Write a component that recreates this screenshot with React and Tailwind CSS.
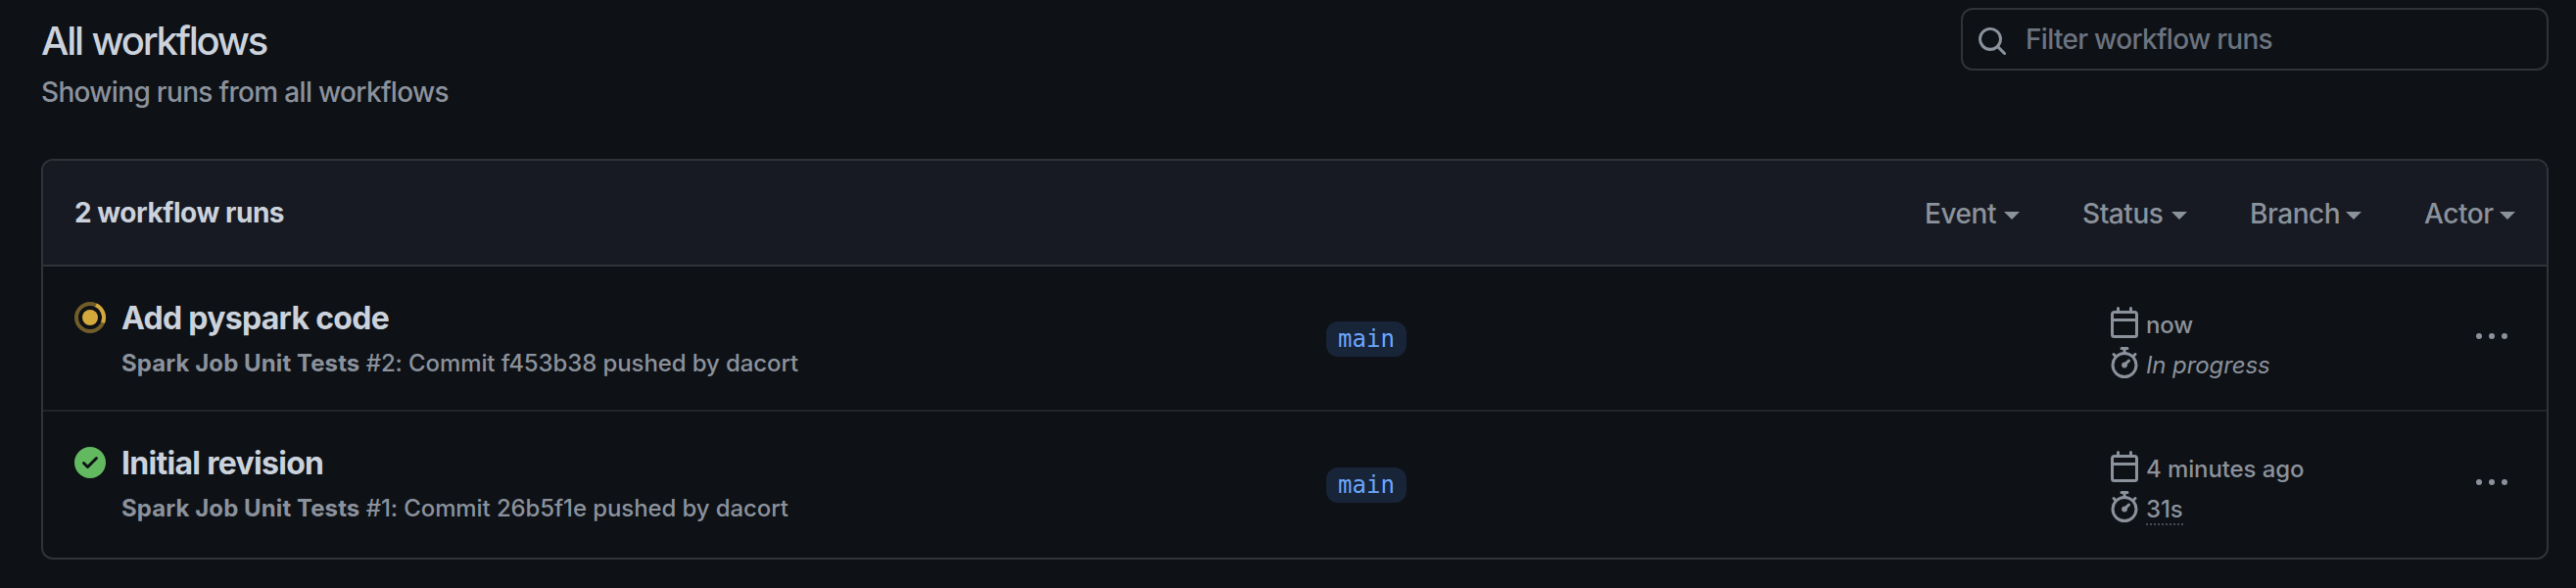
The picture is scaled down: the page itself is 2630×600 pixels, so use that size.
const CALENDAR =
  'M4.75 0a.75.75 0 0 1 .75.75V2h5V.75a.75.75 0 0 1 1.5 0V2h1.25c.966 0 1.75.784 1.75 1.75v10.5A1.75 1.75 0 0 1 13.25 16H2.75A1.75 1.75 0 0 1 1 14.25V3.75C1 2.784 1.784 2 2.75 2H4V.75A.75.75 0 0 1 4.75 0ZM2.5 7.5v6.75c0 .138.112.25.25.25h10.5a.25.25 0 0 0 .25-.25V7.5Zm10.75-4H2.75a.25.25 0 0 0-.25.25V6h11V3.75a.25.25 0 0 0-.25-.25Z';
const STOPWATCH =
  'M5.75.75A.75.75 0 0 1 6.5 0h3a.75.75 0 0 1 0 1.5h-.75v1l-.001.041a6.724 6.724 0 0 1 3.464 1.435l.007-.006.75-.75a.749.749 0 0 1 1.275.326.749.749 0 0 1-.215.734l-.75.75-.006.007a6.75 6.75 0 1 1-10.548 0L2.72 5.03l-.75-.75a.751.751 0 0 1 .018-1.042.751.751 0 0 1 1.042-.018l.75.75.007.006A6.72 6.72 0 0 1 7.25 2.541V1.5h-.75A.75.75 0 0 1 5.75.75ZM8 14.5a5.25 5.25 0 1 0-.001-10.501A5.25 5.25 0 0 0 8 14.5Zm.389-6.7 1.33-1.33a.75.75 0 1 1 1.061 1.06L9.45 8.861A1.503 1.503 0 0 1 8 10.75a1.499 1.499 0 1 1 .389-2.95Z';
const SEARCH =
  'M10.68 11.74a6 6 0 0 1-7.922-8.982 6 6 0 0 1 8.982 7.922l3.04 3.04a.749.749 0 0 1-.326 1.275.749.749 0 0 1-.734-.215ZM11.5 7a4.499 4.499 0 1 0-8.997 0A4.499 4.499 0 0 0 11.5 7Z';
const CHECK_CIRCLE =
  'M8 16A8 8 0 1 1 8 0a8 8 0 0 1 0 16Zm3.78-9.72a.751.751 0 0 0-.018-1.042.751.751 0 0 0-1.042-.018L6.75 9.19 5.28 7.72a.751.751 0 0 0-1.042.018.751.751 0 0 0-.018 1.042l2 2a.75.75 0 0 0 1.06 0Z';

function Icon({ d, className = '' }) {
  return (
    <svg viewBox="0 0 16 16" className={`size-8 shrink-0 fill-current ${className}`}>
      <path d={d} />
    </svg>
  );
}

function RunningIcon() {
  return (
    <svg viewBox="-16 -16 32 32" className="size-8 shrink-0 text-[#d4a93c]">
      <circle r="14" fill="none" stroke="currentColor" strokeWidth="4" opacity="0.5" />
      <path d="M5.9 -12.7A14 14 0 0 1 13 5.2" fill="none" stroke="currentColor" strokeWidth="4" />
      <circle r="8" fill="currentColor" />
    </svg>
  );
}

function Kebab() {
  return (
    <svg viewBox="0 0 32 32" className="size-8 fill-[#8b929c]">
      <circle cx="3" cy="16" r="3" />
      <circle cx="16" cy="16" r="3" />
      <circle cx="29" cy="16" r="3" />
    </svg>
  );
}

function Filter({ label, className }) {
  return (
    <button className={`flex items-center justify-between pt-px text-[28px] leading-[42px] tracking-[-0.45px] ${className}`}>
      <span>{label}</span>
      <svg viewBox="0 0 16 8" className="mt-1 h-2 w-4 fill-current">
        <path d="M0 0h16l-8 8z" />
      </svg>
    </button>
  );
}

function Run({ icon, title, number, commit, when, duration, className, branchClass, metaClass, menuClass }) {
  return (
    <div className={`flex items-start pl-8 ${className}`}>
      <div className="pt-9">{icon}</div>
      <div className="w-[1229px] pl-4 pt-[29px]">
        <h3 className="text-[32px] font-[650] leading-[48px] tracking-[-0.7px] text-[#cbd2dc]">{title}</h3>
        <p className="pt-1 text-[24px] leading-9 tracking-[-0.1px]">
          <b className="font-[650] tracking-[0.08px]">Spark Job Unit Tests</b> #{number}: Commit {commit} pushed by dacort
        </p>
      </div>
      <div className={`w-[816px] pl-[17px] ${branchClass}`}>
        <span className="inline-flex h-9 w-[82px] items-center justify-center rounded-xl bg-[#182438] font-['DejaVu_Sans_Mono',monospace] text-[24px] leading-9 text-[#6ca6fb]">
          main
        </span>
      </div>
      <div className={`flex w-[375px] flex-col gap-[9px] text-[24px] leading-8 tracking-[-0.1px] ${metaClass}`}>
        <div className="flex h-8 gap-1.5">
          <Icon d={CALENDAR} />
          <span className="pt-[3px]">{when}</span>
        </div>
        <div className="flex h-8 gap-1.5">
          <Icon d={STOPWATCH} />
          {duration}
        </div>
      </div>
      <div className={menuClass}>
        <Kebab />
      </div>
    </div>
  );
}

export default function App() {
  return (
    <div className="h-[600px] w-[2630px] overflow-hidden bg-[#0e1116] px-[42px] pr-7 pt-2 font-[Inter,'Liberation_Sans',sans-serif] font-[450] text-[#8b929c]">
      <header className="flex h-[154px] items-start justify-between">
        <div className="pt-1">
          <h1 className="text-[40px] font-[450] leading-[60px] tracking-[-2.2px] text-[#cbd2dc] [word-spacing:1px]">All workflows</h1>
          <p className="pt-px text-[28px] leading-[42px] tracking-[-0.68px]">Showing runs from all workflows</p>
        </div>
        <label className="flex h-16 w-[600px] rounded-xl border-2 border-[#303338] pl-3.5">
          <Icon d={SEARCH} className="mt-4" />
          <span className="pl-[18px] pt-[9px] text-[28px] leading-[42px] tracking-[-0.7px] text-[#6c737e]">Filter workflow runs</span>
        </label>
      </header>
      <section className="h-[409px] overflow-hidden rounded-xl border-2 border-[#303338]">
        <div className="flex h-[108px] items-center border-b-2 border-[#303338] bg-[#171a22] pl-8 pr-8">
          <h2 className="flex-1 text-[28px] font-[650] leading-[42px] tracking-[-0.45px] text-[#cbd2dc]">2 workflow runs</h2>
          <Filter label="Event" className="mr-16 w-[97px]" />
          <Filter label="Status" className="mr-[64px] w-[107px]" />
          <Filter label="Branch" className="mr-[64px] w-[114px]" />
          <Filter label="Actor" className="w-[93px]" />
        </div>
        <Run
          className="h-[148px] border-b-2 border-[#222529]"
          branchClass="pt-14"
          metaClass="pt-[41px]"
          menuClass="pt-[55px]"
          icon={<RunningIcon />}
          title="Add pyspark code"
          number={2}
          commit="f453b38"
          when="now"
          duration={<em className="pt-[3px]">In progress</em>}
        />
        <Run
          className="h-[149px]"
          branchClass="pt-[57px]"
          metaClass="pt-10"
          menuClass="pt-14"
          icon={<Icon d={CHECK_CIRCLE} className="text-[#63b95f]" />}
          title="Initial revision"
          number={1}
          commit="26b5f1e"
          when="4 minutes ago"
          duration={<span className="h-[35px] border-b-2 border-dotted border-[#484b52] pt-[3px]">31s</span>}
        />
      </section>
    </div>
  );
}
